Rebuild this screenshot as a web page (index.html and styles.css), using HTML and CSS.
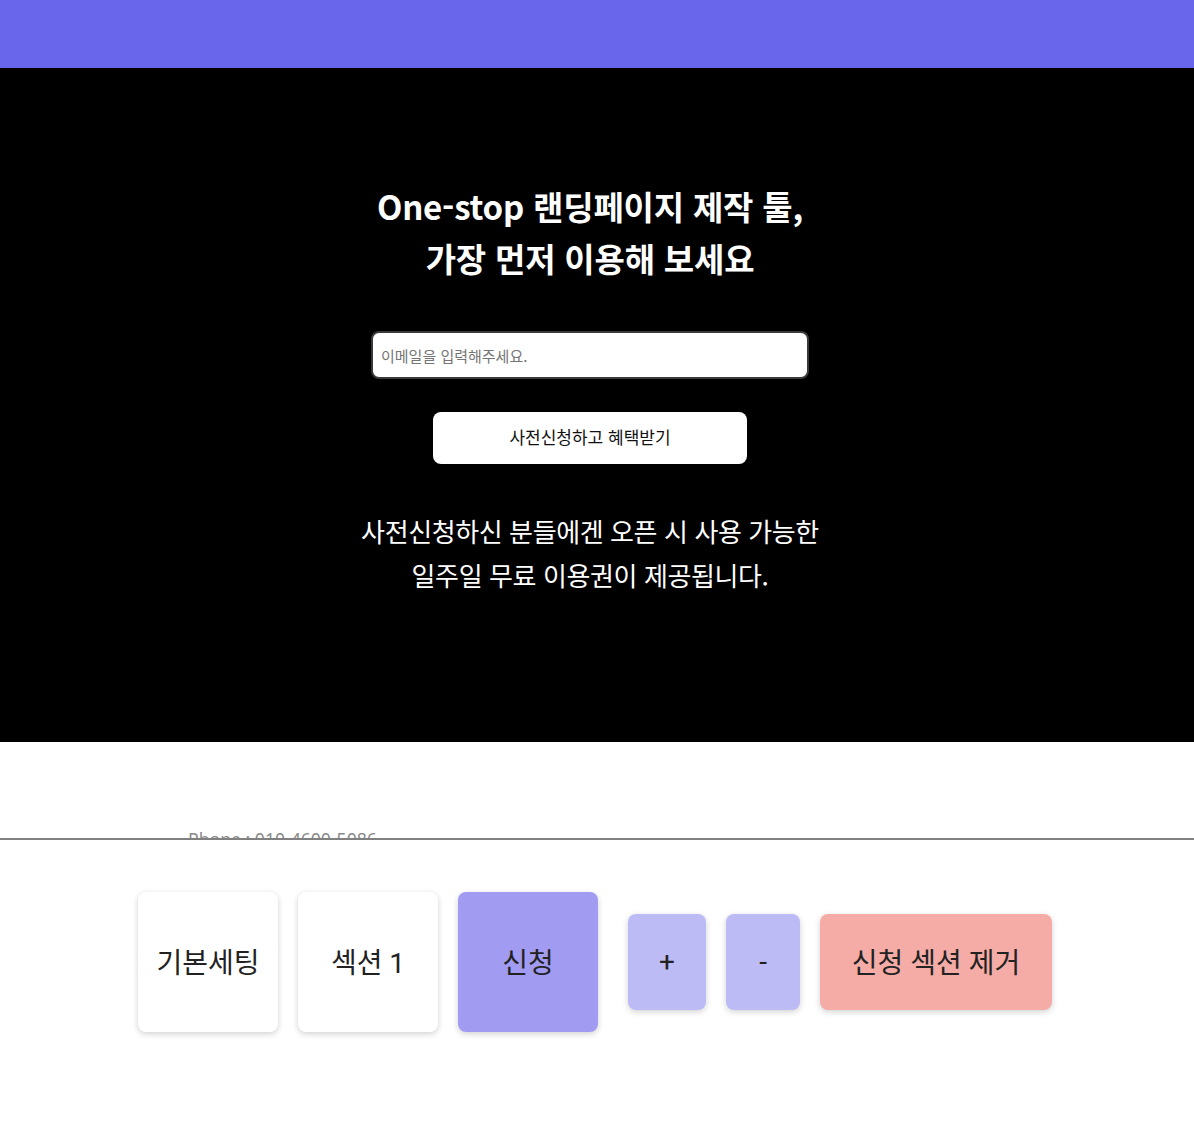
FILE: index.html
```html
<!DOCTYPE html>
<html lang="ko">
<head>
<meta charset="utf-8">
<title>One-stop 랜딩페이지</title>
<link rel="stylesheet" href="styles.css">
</head>
<body>
<header class="topbar"></header>
<section class="hero">
  <h1 class="hero-title">One-stop 랜딩페이지 제작 툴,<br>가장 먼저 이용해 보세요</h1>
  <input class="email-input" type="text" placeholder="이메일을 입력해주세요.">
  <button class="apply-btn" type="button">사전신청하고 혜택받기</button>
  <p class="hero-desc">사전신청하신 분들에겐 오픈 시 사용 가능한<br>일주일 무료 이용권이 제공됩니다.</p>
</section>
<footer class="site-footer">
  <p class="phone">Phone : 010-4600-5086</p>
</footer>
<div class="editor-panel">
  <div class="tab-group">
    <button class="tab" type="button">기본세팅</button>
    <button class="tab" type="button">섹션 1</button>
    <button class="tab tab-active" type="button">신청</button>
  </div>
  <div class="action-group">
    <button class="action action-add action-plus" type="button">+</button>
    <button class="action action-add action-minus" type="button">-</button>
    <button class="action action-remove" type="button">신청 섹션 제거</button>
  </div>
</div>
</body>
</html>
```

FILE: styles.css
```css
* { box-sizing: border-box; }
html, body { margin: 0; padding: 0; }
body {
  font-family: "Noto Sans CJK KR", "Noto Sans", sans-serif;
  background: #fff;
  height: 1132px;
  overflow: hidden;
}
.topbar {
  height: 68px;
  background: #6966ec;
}
.hero {
  height: 674px;
  background: #000;
  display: flex;
  flex-direction: column;
  align-items: center;
  padding: 112px 14px 0 0;
  color: #fff;
}
.hero-title {
  margin: 0;
  font-size: 33px;
  font-weight: 700;
  line-height: 52px;
  text-align: center;
  letter-spacing: -0.2px;
}
.email-input {
  margin-top: 47px;
  width: 438px;
  height: 48px;
  border: 2px solid #3a3a3a;
  border-radius: 8px;
  background: #fff;
  padding: 0 8px;
  font-family: "Noto Sans CJK KR", sans-serif;
  font-size: 15px;
  outline: none;
}
.email-input::placeholder { color: #757575; }
.apply-btn {
  margin-top: 33px;
  width: 314px;
  height: 52px;
  border: none;
  border-radius: 8px;
  background: #fff;
  color: #111;
  font-family: "Noto Sans CJK KR", sans-serif;
  font-size: 17px;
  padding: 0 0 3px;
}
.hero-desc {
  margin: 45px 0 0;
  font-size: 26px;
  line-height: 44px;
  text-align: center;
  letter-spacing: -0.4px;
}
.site-footer {
  padding: 84px 0 0 188px;
}
.phone {
  margin: 0;
  font-family: "Noto Sans", sans-serif;
  font-size: 17.6px;
  line-height: 26px;
  color: #8a8a8a;
}
.editor-panel {
  position: fixed;
  left: 0;
  right: 0;
  bottom: 0;
  height: 294px;
  background: #fff;
  border-top: 2px solid #808080;
  display: flex;
  justify-content: center;
  align-items: flex-start;
  gap: 30px;
  padding: 52px 4px 0 0;
}
.tab-group, .action-group {
  display: flex;
  align-items: center;
  gap: 20px;
}
.action-group { height: 140px; }
.tab, .action {
  border: none;
  border-radius: 8px;
  font-family: "Roboto", "Noto Sans CJK KR", sans-serif;
  font-size: 28px;
  color: #222;
  box-shadow: 0 2px 6px rgba(0,0,0,0.18);
  padding: 0 0 2px;
}
.tab {
  width: 140px;
  height: 140px;
  background: #fff;
}
.tab-active { background: #a29bf2; }
.action { height: 96px; }
.action-add { background: #bdbbf6; }
.action-plus { width: 78px; }
.action-minus { width: 74px; }
.action-remove { width: 232px; background: #f5aba6; }
```
